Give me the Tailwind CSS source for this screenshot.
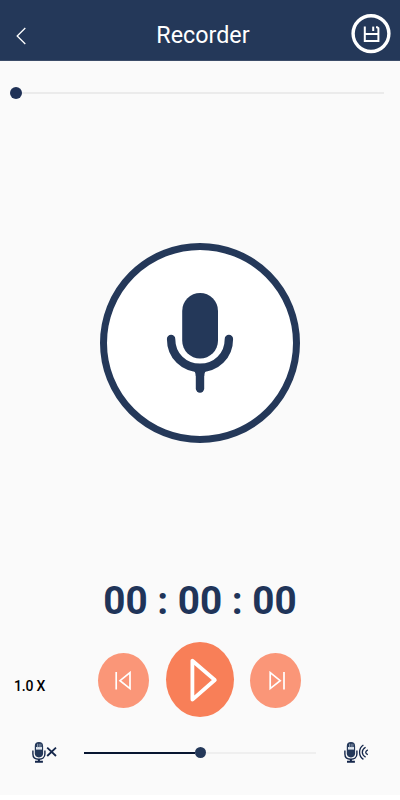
<!DOCTYPE html>
<html lang="en">
<head>
  <meta charset="UTF-8">
  <meta name="viewport" content="width=device-width, initial-scale=1.0">
  <title>Recorder</title>
  <script src="https://cdn.jsdelivr.net/npm/@tailwindcss/browser@4"></script>
</head>
<body class="bg-white font-['Roboto',sans-serif]">
  <div class="flex flex-col h-[795px] bg-[#fafafa] overflow-hidden">

    <!-- Header -->
    <header class="grid grid-cols-[60px_1fr_60px] items-center h-[61px] pt-[7px] bg-[#243859] border-b border-[#3b4c68] text-white shrink-0">
      <button aria-label="Back" class="pl-4 pt-[4px]">
        <svg class="w-[10px] h-[18px]" viewBox="0 0 10 18" fill="none" stroke="#fff" stroke-width="1.3"><path d="M9.3 1 1.2 9l8.1 8"/></svg>
      </button>
      <h1 class="text-center text-[23.3px] leading-7 pl-[6px] pt-[2px]">Recorder</h1>
      <button aria-label="Save" class="pl-[11px]">
        <svg class="w-10 h-10" viewBox="0 0 40 40" fill="none" stroke="#fff">
          <circle cx="20" cy="19.6" r="17.9" stroke-width="3.4"/>
          <path d="M13.8 12.6V27H27.4V14.2L26.2 13.2H25" stroke-width="2"/>
          <path d="M13 20H27.3" stroke-width="2"/>
          <path d="M22.2 12.6V17" stroke-width="2"/>
        </svg>
      </button>
    </header>

    <!-- Playback progress -->
    <div class="flex items-center h-3 mt-[26px] ml-[10px] mr-4">
      <span class="size-[11.5px] rounded-full bg-[#1f3156]"></span>
      <span class="flex-1 h-[2px] bg-[#ebebeb]"></span>
    </div>

    <!-- Microphone -->
    <div class="flex items-center justify-center size-[200px] mt-[144px] mx-auto rounded-full border-[7px] border-[#243859] bg-white">
      <svg class="w-[68px] h-[102px]" viewBox="0 0 68 102" fill="none" stroke="#243859" stroke-linecap="round">
        <rect x="16.2" y="1" width="35.8" height="65.5" rx="17.9" fill="#243859" stroke="none"/>
        <path d="M5.1 47C5.1 64 18 75.8 34 75.8S62.9 64 62.9 47" stroke-width="8.4"/>
        <path d="M34 78V96.5" stroke-width="8.4"/>
        <path d="M26 78Q29.8 79 29.8 84H38.2Q38.2 79 42 78Z" fill="#243859" stroke="none"/>
      </svg>
    </div>

    <!-- Timer -->
    <div class="mt-[134px] h-[48px] text-center text-[38.7px] leading-[48px] font-bold text-[#203459] whitespace-nowrap">00 : 00 : 00</div>

    <!-- Controls -->
    <div class="grid grid-cols-[98px_1fr_99px] items-center h-[75px] mt-[17px]">
      <span class="pl-[14px] pt-[12px] text-sm tracking-[-0.2px] font-medium text-black">1.0 X</span>
      <div class="flex items-center justify-between">
        <button aria-label="Previous" class="flex items-center justify-center w-[51px] h-[55px] mt-[2px] rounded-[50%] bg-[#fa9678]">
          <svg class="w-[18px] h-5" viewBox="0 0 18 20" fill="none" stroke="#fff" stroke-width="1.7"><path d="M1.2 1V18.5M15 1.6V17.6L5 9.7Z"/></svg>
        </button>
        <button aria-label="Play" class="flex items-center justify-center w-[68px] h-[75px] rounded-[50%] bg-[#f87f58]">
          <svg class="w-[68px] h-[75px]" viewBox="0 0 68 75" fill="none" stroke="#fff" stroke-width="3.8" stroke-linejoin="round"><path d="M26.4 18.8V57.6L48.8 38Z"/></svg>
        </button>
        <button aria-label="Next" class="flex items-center justify-center w-[51px] h-[55px] mt-[2px] rounded-[50%] bg-[#fa9678]">
          <svg class="w-[18px] h-5" viewBox="0 0 18 20" fill="none" stroke="#fff" stroke-width="1.7"><path d="M17 1V18.5M3.2 1.6V17.6L13.2 9.7Z"/></svg>
        </button>
      </div>
    </div>

    <!-- Volume -->
    <div class="flex items-center h-[22px] mt-[24.5px]">
      <svg class="ml-8 w-[26px] h-[22px]" viewBox="0 0 26 22" fill="none" stroke="#14264a">
        <rect x="2.8" y="0" width="8.3" height="15.4" rx="4.1" fill="#243859" stroke="none"/>
        <path d="M4 5H10V7.6H4Z" fill="#dfe6ee" stroke="none"/>
        <path d="M5.5 1.8V5.4M7.2 1.8V5.4M8.9 1.8V5.4" stroke="#9aa8ba" stroke-width="0.8"/>
        <path d="M0.9 8.4V12C0.9 15.4 3.6 17.2 6.9 17.2S12.9 15.4 12.9 12V8.4" stroke-width="1.4"/>
        <path d="M6.9 17V20M3 19.8H10.9" stroke-width="2"/>
        <path d="M15.2 5.6 24 14M24 5.6 15.2 14" stroke-width="1.8"/>
      </svg>
      <div class="flex items-center w-[232px] ml-[26px]">
        <span class="w-[110.5px] h-[2px] bg-[#071530]"></span>
        <span class="size-[11.5px] rounded-full bg-[#243859]"></span>
        <span class="flex-1 h-[2px] bg-[#efefef]"></span>
      </div>
      <svg class="ml-7 w-[26px] h-[22px]" viewBox="0 0 26 22" fill="none" stroke="#14264a">
        <rect x="2.8" y="0" width="8.3" height="15.4" rx="4.1" fill="#243859" stroke="none"/>
        <path d="M4 5H10V7.6H4Z" fill="#dfe6ee" stroke="none"/>
        <path d="M5.5 1.8V5.4M7.2 1.8V5.4M8.9 1.8V5.4" stroke="#9aa8ba" stroke-width="0.8"/>
        <path d="M0.9 8.4V12C0.9 15.4 3.6 17.2 6.9 17.2S12.9 15.4 12.9 12V8.4" stroke-width="1.4"/>
        <path d="M6.9 17V20M3 19.8H10.9" stroke-width="2"/>
        <path d="M19.4 3C14.3 6.4 14.3 14 19.4 17.4M21.6 5.3C17.2 7.8 17.2 12.6 21.6 15.1M23.8 7.8C21 9.2 21 11.4 23.8 12.7" stroke-width="1.3"/>
      </svg>
    </div>
  </div>
</body>
</html>
